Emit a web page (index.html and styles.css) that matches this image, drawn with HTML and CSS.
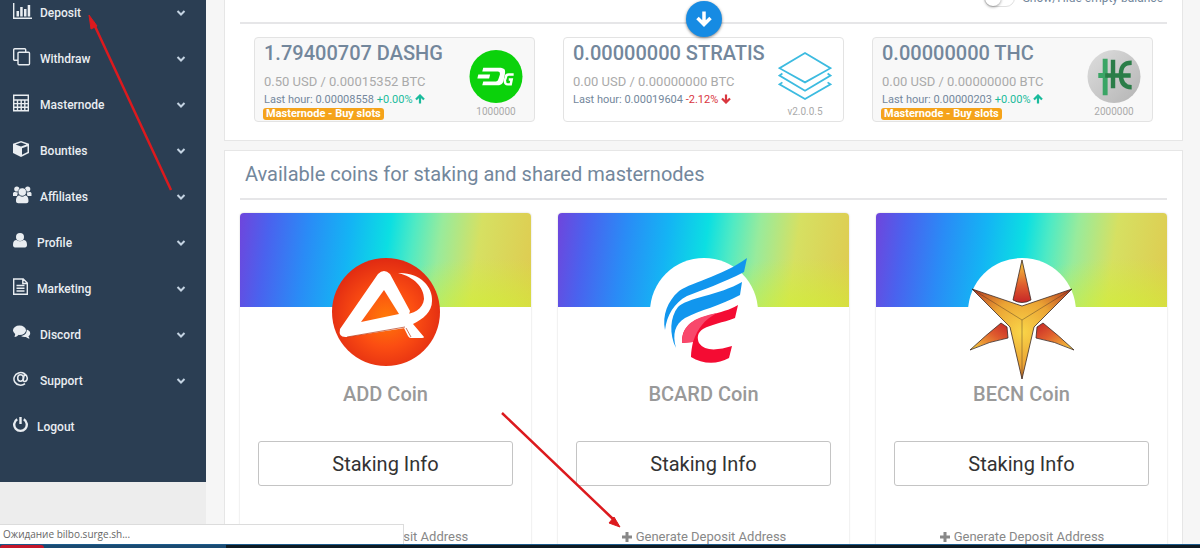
FILE: index.html
```html
<!DOCTYPE html>
<html lang="en">
<head>
    <meta charset="UTF-8">
    <meta name="viewport" content="width=device-width, initial-scale=1.0">
    <title>Staking wallet</title>
    <link rel="stylesheet" href="styles.css">
</head>
<body>
    <svg class="sprite" aria-hidden="true">
        <defs>
            <symbol id="chevron" viewBox="0 0 10 8"><path d="M1.5 2l3.5 3.5L8.500 2" fill="none" stroke="currentColor" stroke-width="2"/></symbol>
            <symbol id="arrow-up" viewBox="0 0 10 10"><path d="M5 9.500V2M1 5.500l4-4 4 4" fill="none" stroke="currentColor" stroke-width="2.200"/></symbol>
            <symbol id="plus" viewBox="0 0 12 12"><path d="M6 1v10M1 6h10" stroke="currentColor" stroke-width="3"/></symbol>
        </defs>
    </svg>

    <div class="page">
        <nav class="sidebar">
            <a href="#" class="nav-item">
                <svg class="nav-icon" viewBox="0 0 19 18"><path d="M.7 1v15.300H19" fill="none" stroke="currentColor" stroke-width="1.400"/><path d="M3.500 9H6v5.500H3.500zM7.200 5h2.500v9.500H7.200zM11 7h2.500v7.500H11zM14.700 3h2.500v11.500h-2.500z" fill="currentColor"/></svg>
                <span>Deposit</span>
                <svg class="chevron"><use href="#chevron"/></svg>
            </a>
            <a href="#" class="nav-item">
                <svg class="nav-icon" viewBox="0 0 19 18"><path d="M5 12.300H1.700a1 1 0 0 1-1-1V1.700a1 1 0 0 1 1-1h10a1 1 0 0 1 1 1V4M6 4.200h9.500a1 1 0 0 1 1 1v10.500a1 1 0 0 1-1 1H6a1 1 0 0 1-1-1V5.200a1 1 0 0 1 1-1z" fill="none" stroke="currentColor" stroke-width="1.400"/></svg>
                <span>Withdraw</span>
                <svg class="chevron"><use href="#chevron"/></svg>
            </a>
            <a href="#" class="nav-item">
                <svg class="nav-icon" viewBox="0 0 19 18"><path d="M.7 1.200h14.600v15.600H.7zM.7 6h14.600M.7 9.600h14.600M.7 13.200h14.600M4.500 6v11M8.200 6v11M11.800 6v11" fill="none" stroke="currentColor" stroke-width="1.400"/></svg>
                <span>Masternode</span>
                <svg class="chevron"><use href="#chevron"/></svg>
            </a>
            <a href="#" class="nav-item">
                <svg class="nav-icon" viewBox="0 0 19 18"><path d="M8 1l8 2.800v9.200L8 17 0 13V3.800z" fill="currentColor"/><path d="M8 2.600l5.500 1.900L8 6.500 2.500 4.500zM9 8.300l5.500-2v5.700L9 14.800z" fill="#2b3e53"/></svg>
                <span>Bounties</span>
                <svg class="chevron"><use href="#chevron"/></svg>
            </a>
            <a href="#" class="nav-item">
                <svg class="nav-icon" viewBox="0 0 19 18"><g fill="currentColor"><circle cx="3.800" cy="3" r="2.600"/><circle cx="14.700" cy="3" r="2.600"/><path d="M0 10V7.500C0 6 1.500 5.500 5 6.500L4 10zM18.500 10V7.500c0-1.500-1.500-2-5-1l1 3.500z"/><circle cx="9.250" cy="6" r="4"/><path d="M3 15c0-4 1.500-5.500 3.500-5.500 1.800 1.200 3.700 1.200 5.500 0 2 0 3.500 1.500 3.500 5.500 0 1.500-1 2.200-2.200 2.200h-8C4 17.200 3 16.500 3 15z"/></g><circle cx="9.250" cy="6" r="4.200" fill="none" stroke="#2b3e53" stroke-width=".6"/></svg>
                <span>Affiliates</span>
                <svg class="chevron"><use href="#chevron"/></svg>
            </a>
            <a href="#" class="nav-item">
                <svg class="nav-icon narrow" viewBox="0 0 16 18"><g fill="currentColor"><circle cx="7" cy="5" r="4"/><path d="M0 13c0-3.500 1.200-5 3.500-5 2.200 1.800 4.800 1.800 7 0C12.800 8 14 9.500 14 13c0 1.500-.8 2.500-2 2.500H2C.8 15.500 0 14.500 0 13z"/></g></svg>
                <span>Profile</span>
                <svg class="chevron"><use href="#chevron"/></svg>
            </a>
            <a href="#" class="nav-item">
                <svg class="nav-icon narrow" viewBox="0 0 16 18"><path d="M.7 1h9.500l4.100 4v11.300H.7zM9.800 1v4.500h4.500M3.500 7.500h8M3.500 10.300h8M3.500 13h8" fill="none" stroke="currentColor" stroke-width="1.400"/></svg>
                <span>Marketing</span>
                <svg class="chevron"><use href="#chevron"/></svg>
            </a>
            <a href="#" class="nav-item">
                <svg class="nav-icon" viewBox="0 0 19 18"><path d="M13.700 5.500c2.200.7 3.500 2 3.500 3.700 0 1.300-.7 2.300-1.800 3l1.200 2.300c-1.600 0-2.800-.6-3.700-1.500-1.900.2-3.500-.1-4.900-.9 3.500-.6 6-2.700 5.700-6.600z" fill="currentColor"/><ellipse cx="6.500" cy="6.300" rx="6.500" ry="4.800" fill="currentColor"/><path d="M2.500 9l-1 4c2 0 3.200-1 4.200-2.500z" fill="currentColor"/></svg>
                <span>Discord</span>
                <svg class="chevron"><use href="#chevron"/></svg>
            </a>
            <a href="#" class="nav-item">
                <svg class="nav-icon" viewBox="0 0 19 18"><g fill="none" stroke="currentColor" stroke-width="1.500"><path d="M12 13.700A6.700 6.300 0 1 1 14.300 8c0 4.200-4.600 4.500-4 1.500l1-5"/><ellipse cx="7.500" cy="8" rx="2.800" ry="3.200"/></g></svg>
                <span>Support</span>
                <svg class="chevron"><use href="#chevron"/></svg>
            </a>
            <a href="#" class="nav-item">
                <svg class="nav-icon narrow" viewBox="0 0 16 18"><path d="M4.200 3.200a6.300 6.300 0 1 0 6.600 0M7.500 1v7" fill="none" stroke="currentColor" stroke-width="2.400"/></svg>
                <span>Logout</span>
            </a>
        </nav>

        <main class="content">
            <section class="panel balances">
                <div class="toggle-row">
                    <input type="checkbox" id="showEmpty" class="toggle">
                    <label for="showEmpty">Show/Hide empty balance</label>
                </div>
                <div class="divider">
                    <button type="button" class="expand-button" aria-label="Expand">
                        <svg viewBox="0 0 18 18"><path d="M9 1.500V14M2.500 8L9 14.500 15.500 8" fill="none" stroke="currentColor" stroke-width="3.500"/></svg>
                    </button>
                </div>
                <div class="balance-grid">
                    <article class="balance-card">
                        <div class="balance-info">
                            <h3>1.79400707 DASHG</h3>
                            <p class="worth">0.50 USD / 0.00015352 BTC</p>
                            <p class="rate">Last hour: 0.00008558 <span class="up">+0.00% <svg class="trend"><use href="#arrow-up"/></svg></span></p>
                            <a href="#" class="badge">Masternode - Buy slots</a>
                        </div>
                        <div class="balance-coin">
                            <svg viewBox="0 0 54 54">
                                <circle cx="27" cy="27" r="27" fill="#0bd20b"/>
                                <path d="M14 18h16c6 0 7 2 6 7l-1 5c-1 5-3 6-8 6H13l1-4h12c3 0 3-1 4-4l1-3c0-2 0-3-3-3H13z" fill="#fff"/>
                                <path d="M9 25h12l-1 4H8z" fill="#fff"/>
                                <path d="M45 25h-5c-2 0-3 1-3 3l-1 3c0 3 1 4 3 4h3l1-5h-3" fill="none" stroke="#fff" stroke-width="2.500"/>
                            </svg>
                            <small>1000000</small>
                        </div>
                    </article>
                    <article class="balance-card plain">
                        <div class="balance-info">
                            <h3>0.00000000 STRATIS</h3>
                            <p class="worth">0.00 USD / 0.00000000 BTC</p>
                            <p class="rate">Last hour: 0.00019604 <span class="down">-2.12% <svg class="trend"><use href="#arrow-up"/></svg></span></p>
                        </div>
                        <div class="balance-coin">
                            <svg viewBox="0 0 54 54">
                                <g fill="none" stroke="#3cbbe0" stroke-width="1.800">
                                    <path d="M27 3l26 15.500L27 33 1 18.500z"/>
                                    <path d="M4 24l-3 2 26 15.500L53 26l-3-2M4 33l-3 2 26 15 26-15-3-2"/>
                                </g>
                            </svg>
                            <small>v2.0.0.5</small>
                        </div>
                    </article>
                    <article class="balance-card">
                        <div class="balance-info">
                            <h3>0.00000000 THC</h3>
                            <p class="worth">0.00 USD / 0.00000000 BTC</p>
                            <p class="rate">Last hour: 0.00000203 <span class="up">+0.00% <svg class="trend"><use href="#arrow-up"/></svg></span></p>
                            <a href="#" class="badge">Masternode - Buy slots</a>
                        </div>
                        <div class="balance-coin">
                            <svg viewBox="0 0 54 54">
                                <linearGradient id="silver" x1="0" y1="0" x2="1" y2="1"><stop stop-color="#dedede"/><stop offset="1" stop-color="#b4b4b4"/></linearGradient>
                                <circle cx="27" cy="27" r="27" fill="url(#silver)"/>
                                <path d="M18 9v37M11 26h10" stroke="#3aa565" stroke-width="5"/>
                                <path d="M26 10v29M18 26h26" stroke="#2b7d48" stroke-width="4.500"/>
                                <path d="M45 13c-8 0-11 4-11 12s3 13 11 13" fill="none" stroke="#2b7d48" stroke-width="4.500"/>
                            </svg>
                            <small>2000000</small>
                        </div>
                    </article>
                </div>
            </section>

            <section class="panel coins">
                <h2>Available coins for staking and shared masternodes</h2>
                <div class="divider"></div>
                <div class="coin-grid">
                    <article class="coin-card">
                        <div class="banner"></div>
                        <svg class="coin-logo" viewBox="0 0 108 122">
                            <radialGradient id="fire" cx=".5" cy=".55" r=".55"><stop stop-color="#ff7a08"/><stop offset=".5" stop-color="#fb4d12"/><stop offset="1" stop-color="#e02a12"/></radialGradient>
                            <circle cx="54" cy="54" r="54" fill="url(#fire)"/>
                            <path d="M46 16q6-6 12 0L78 53l-5 17L15 79q-9 1-7-8zM52 32L29 64l38-8z" fill="#fff" fill-rule="evenodd"/>
                            <path d="M66 15c22-1 35 14 34 28 0 11-9 18-19 23l11 13q0 1-2 1H79q-2 0-3-2l-4-8-3-13c13-1 22-6 23-16 0-12-10-22-26-26z" fill="#fff"/>
                            <path d="M74 70l5 9M15 79l58-10" fill="none" stroke="#b53512" stroke-width=".7"/>
                        </svg>
                        <h3>ADD Coin</h3>
                        <button type="button" class="staking-button">Staking Info</button>
                        <a href="#" class="deposit-link"><svg><use href="#plus"/></svg>Generate Deposit Address</a>
                    </article>
                    <article class="coin-card">
                        <div class="banner"></div>
                        <svg class="coin-logo" viewBox="0 0 108 122">
                            <circle cx="54" cy="54" r="54" fill="#fff"/>
                            <path d="M97 0l-3 14C73 25 52 32 37 38 24 45 17 57 15 72 12 57 18 43 28 34 36 26 73 18 97 0z" fill="#1196ee"/>
                            <path d="M92 24l-2 13C70 48 50 52 35 60 25 66 22 76 26 90 19 76 20 59 28 49 36 40 70 37 92 24z" fill="#1196ee"/>
                            <path d="M88 47l-3 13c-13 5-23 6-32 11-6 4-6 9-4 14 6 9 20 7 33 3l-3 12c-12 7-27 6-38-1 0-6 1-10 2-15l-11 1c0-7 1-12 5-16 10-13 35-12 51-22z" fill="#f40c33"/>
                            <path d="M32 85c0-21 16-26 35-30-13 7-19 15-24 29z" fill="#f8486b"/>
                        </svg>
                        <h3>BCARD Coin</h3>
                        <button type="button" class="staking-button">Staking Info</button>
                        <a href="#" class="deposit-link"><svg><use href="#plus"/></svg>Generate Deposit Address</a>
                    </article>
                    <article class="coin-card">
                        <div class="banner"></div>
                        <svg class="coin-logo" viewBox="0 0 108 122">
                            <radialGradient id="gold" gradientUnits="userSpaceOnUse" cx="54" cy="74" r="66"><stop stop-color="#f9d548"/><stop offset=".5" stop-color="#eba434"/><stop offset="1" stop-color="#b4331f"/></radialGradient>
                            <linearGradient id="ray" x1="0" y1="0" x2="0" y2="1"><stop stop-color="#f5cf3e"/><stop offset=".6" stop-color="#df5b2d"/><stop offset="1" stop-color="#c52627"/></linearGradient>
                            <linearGradient id="rayLeft" x1="0" y1="1" x2="1" y2="0"><stop stop-color="#f8d83e"/><stop offset=".6" stop-color="#df5b2d"/><stop offset="1" stop-color="#c52627"/></linearGradient>
                            <linearGradient id="rayRight" x1="1" y1="1" x2="0" y2="0"><stop stop-color="#f8d83e"/><stop offset=".6" stop-color="#df5b2d"/><stop offset="1" stop-color="#c52627"/></linearGradient>
                            <circle cx="54" cy="54" r="54" fill="#fff"/>
                            <g stroke="#3b2a24" stroke-width=".8">
                                <path d="M54 2l9 40q-9 5-18 0z" fill="url(#ray)"/>
                                <path d="M33 65l6 4 1 11Q22 83 2 92 18 77 33 65z" fill="url(#rayLeft)"/>
                                <path d="M75 65l-6 4-1 11q18 3 38 12Q90 77 75 65z" fill="url(#rayRight)"/>
                                <path d="M54 48l50-17-38 38-12 52-12-52L4 31z" fill="url(#gold)"/>
                                <path d="M4 31l50 31 50-31M54 62v59" fill="none" stroke-width=".4"/>
                            </g>
                        </svg>
                        <h3>BECN Coin</h3>
                        <button type="button" class="staking-button">Staking Info</button>
                        <a href="#" class="deposit-link"><svg><use href="#plus"/></svg>Generate Deposit Address</a>
                    </article>
                </div>
            </section>
        </main>
    </div>

    <!-- hint arrows -->
    <svg class="hints" aria-hidden="true">
        <g stroke="#dc1a1e" stroke-width="2.500" fill="#dc1a1e">
            <path d="M171 190L93 22M502 413L613 519"/>
            <path d="M89 15l8 11-6 3zM620 527l-11-4 5-6z" stroke-width="1"/>
        </g>
    </svg>

    <div class="status">Ожидание bilbo.surge.sh...</div>
    <footer class="taskbar">
        <div class="taskbar-left"><span class="launcher"></span></div>
    </footer>
</body>
</html>
```

FILE: styles.css
```css
* {
    margin: 0;
    padding: 0;
    box-sizing: border-box;
}

body {
    font-family: Roboto, Arial, sans-serif;
    background-color: #ededed;
    color: #73879c;
    overflow: hidden;
}

a {
    text-decoration: none;
}

.sprite {
    display: none;
}

.page {
    display: flex;
    align-items: flex-start;
    height: 100vh;
    overflow: hidden;
}

/* Sidebar */
.sidebar {
    flex: 0 0 206px;
    margin-top: -10px;
    padding-bottom: 32px;
    background-color: #2b3e53;
}

.nav-item {
    display: flex;
    align-items: center;
    gap: 8px;
    height: 46px;
    padding: 0 20px 0 13px;
    color: #e9edf1;
    font-size: 12px;
    font-weight: 500;
}

.nav-icon {
    width: 19px;
    height: 18px;
    margin-bottom: 4px;
}

.nav-icon.narrow {
    width: 16px;
}

.chevron {
    width: 10px;
    height: 8px;
    margin-left: auto;
    color: #c4d3e2;
}

/* Content */
.content {
    flex: 1;
    margin-top: -24px;
    padding: 0 17px 0 18px;
    background-color: #f6f6f6;
}

.panel {
    margin-bottom: 9px;
    padding: 0 15px;
    border: 1px solid #e6e6e6;
    background-color: #fff;
}

.divider {
    position: relative;
    height: 2px;
    background-color: #e6e6e8;
}

.toggle-row {
    display: flex;
    align-items: center;
    justify-content: flex-end;
    gap: 8px;
    padding: 12px 4px 15px;
    font-size: 12px;
    line-height: 18px;
}

.toggle {
    appearance: none;
    width: 31px;
    height: 18px;
    border: 1px solid #dfdfdf;
    border-radius: 9px;
    background-color: #fff;
}

.toggle::before {
    content: "";
    display: block;
    width: 16px;
    height: 16px;
    border-radius: 50%;
    box-shadow: 0 1px 3px rgba(0, 0, 0, 0.4);
}

.expand-button {
    position: absolute;
    top: -21px;
    left: 50%;
    width: 36px;
    height: 36px;
    padding: 9px;
    transform: translateX(-50%);
    border: none;
    border-radius: 50%;
    background-color: #168be3;
    box-shadow: 0 1px 3px rgba(0, 0, 0, 0.5);
    color: #fff;
    cursor: pointer;
}

.expand-button svg {
    display: block;
    width: 18px;
    height: 18px;
}

.balance-grid {
    display: grid;
    grid-template-columns: repeat(3, 1fr);
    gap: 28px;
    padding: 13px 14px 18px;
}

.balance-card {
    display: flex;
    justify-content: space-between;
    height: 85px;
    padding: 0 11px 0 9px;
    border: 1px solid #e3e3e3;
    border-radius: 4px;
    background-color: #f8f8f8;
}

.balance-card.plain {
    background-color: #fff;
}

.balance-info {
    white-space: nowrap;
}

.balance-info h3 {
    font-size: 20px;
    font-weight: 500;
    line-height: 31px;
}

.worth {
    margin-top: 4px;
    color: #aaa;
    font-size: 13px;
    line-height: 18px;
}

.rate {
    font-size: 11px;
    line-height: 17px;
}

.trend {
    width: 10px;
    height: 10px;
    vertical-align: -1px;
}

.up {
    color: #1abb9c;
}

.down {
    color: #d9363e;
}

.down .trend {
    transform: rotate(180deg);
}

.badge {
    display: block;
    width: fit-content;
    padding: 0 3px;
    margin-left: -1px;
    border-radius: 3px;
    background-color: #f5a31a;
    color: #fff;
    font-size: 11px;
    font-weight: 700;
    line-height: 12px;
}

.balance-coin {
    display: flex;
    flex-direction: column;
    align-items: center;
    padding-top: 12px;
    color: #aaa;
}

.balance-coin svg {
    width: 54px;
    height: 54px;
}

.balance-coin small {
    font-size: 10px;
    line-height: 18px;
}

/* Coins */
.coins h2 {
    padding: 0 5px;
    font-size: 20px;
    font-weight: 400;
    line-height: 47px;
}

.coin-grid {
    display: grid;
    grid-template-columns: repeat(3, 1fr);
    gap: 27px;
    padding: 13px 0 20px;
}

.coin-card {
    display: flex;
    flex-direction: column;
    align-items: center;
    padding-bottom: 20px;
    border-radius: 4px;
    box-shadow: 0 0 2px rgba(0, 0, 0, 0.2);
}

.banner {
    width: 100%;
    height: 94px;
    border-radius: 4px 4px 0 0;
    background:
        radial-gradient(ellipse at 85% 110%, rgba(208, 240, 50, 0.8), rgba(208, 240, 50, 0) 40%),
        linear-gradient(98deg, #6f45dc 0%, #4a62ee 10%, #2a8bf6 23%, #14b4f4 37%, #0cdfe2 50%, #4feac4 58%, #98eb9c 67%, #d6e062 80%, #dfcb50 100%);
}

.coin-logo {
    width: 108px;
    height: 122px;
    margin-top: -49px;
    z-index: 1;
}

.coin-card h3 {
    color: #999;
    font-size: 20px;
    font-weight: 500;
    line-height: 28px;
}

.staking-button {
    width: calc(100% - 36px);
    height: 45px;
    margin-top: 33px;
    border: 1px solid #c4c4c4;
    border-radius: 3px;
    background-color: #fff;
    color: #333;
    font-family: inherit;
    font-size: 20px;
    cursor: pointer;
}

.deposit-link {
    display: flex;
    align-items: center;
    gap: 3px;
    margin-top: 42px;
    color: #888;
    font-size: 13px;
    line-height: 18px;
}

.deposit-link svg {
    width: 12px;
    height: 12px;
}

/* Things drawn over the page */
.hints {
    position: absolute;
    top: 0;
    left: 0;
    width: 100%;
    height: 100%;
    pointer-events: none;
    z-index: 2;
}

.status {
    position: fixed;
    bottom: 4px;
    left: 0;
    width: 404px;
    padding: 0 3px;
    border: 1px solid #dcdcdc;
    border-width: 1px 1px 0 0;
    background-color: #fff;
    color: #666;
    font-family: "Open Sans", sans-serif;
    font-size: 10px;
    line-height: 19px;
    z-index: 3;
}

.taskbar {
    position: fixed;
    bottom: 0;
    left: 0;
    width: 100%;
    height: 4px;
    border-top: 1px solid #1c5b8c;
    background-color: #0f1a22;
    overflow: hidden;
    z-index: 3;
}

.taskbar-left {
    width: 226px;
    height: 3px;
    background-color: #1b4a70;
}

.launcher {
    display: block;
    width: 44px;
    height: 3px;
    border-radius: 3px 3px 0 0;
    background-color: #c4172b;
}
```
